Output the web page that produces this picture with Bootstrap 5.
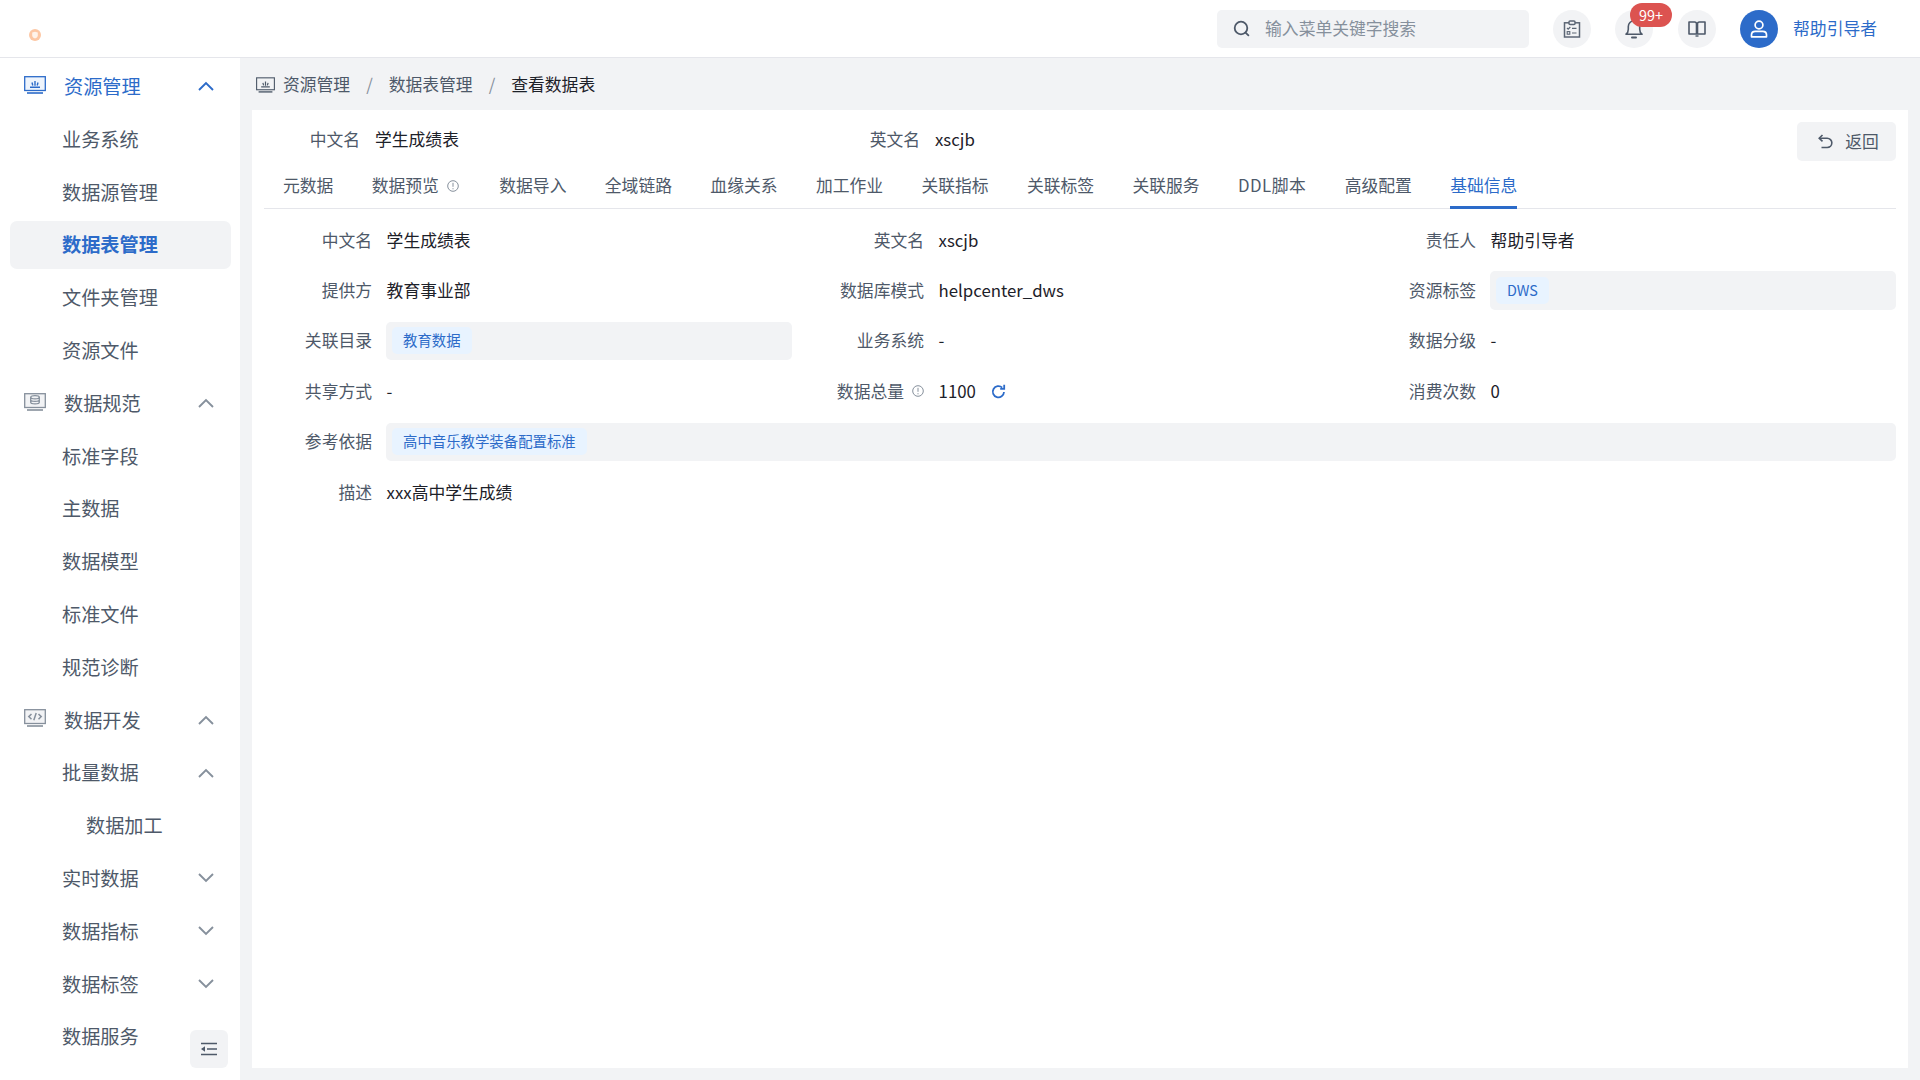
<!DOCTYPE html>
<html lang="zh-CN">
<head>
<meta charset="utf-8">
<title>查看数据表</title>
<link href="https://cdn.jsdelivr.net/npm/bootstrap@5.3.0/dist/css/bootstrap.min.css" rel="stylesheet">
<style>
:root{--brand:#2c6bc9;--page:#f2f3f5;--muted:#4e5969;--ink:#1d2129;--hair:#e5e6eb;--faint:#86909c}
html,body{height:100%}
body{font-family:"Noto Sans CJK SC","Liberation Sans",sans-serif;font-size:16.8px;color:var(--ink);background:var(--page);overflow:hidden}
svg{display:block;flex:none}
.app-shell{height:1080px}
.top-bar{height:58px;background:#fff;border-bottom:1.2px solid var(--hair);padding-right:43px}
.logo-slot{padding:28px 0 0 28px}
.search-box{width:312px;height:38px;background:var(--page);border-radius:5px;padding-left:16px;gap:15px;margin-right:24px}
.search-box .form-control{border:0;background:transparent;box-shadow:none;padding:0;font-size:16.8px;color:var(--ink);border-radius:0}
.search-box .form-control::placeholder{color:var(--faint);opacity:1}
.round-btn{width:38px;height:38px;border-radius:50%;background:var(--page);margin-right:24px}
.round-btn.bell-btn{margin-right:25px}
.count-pill{top:-7px;left:15px;width:42px;height:24px;border-radius:12px;background:#dc5350;color:#fff;font-size:14.4px;line-height:24px;text-align:center}
.avatar-btn{background:var(--brand);margin-right:15px}
.user-name{color:var(--brand)}
.side-nav{width:240px;background:#fff;padding:4.400px 9px 0 10px}
.side-item{height:48px;margin-bottom:4.8px;border-radius:7px;color:var(--muted);font-size:19.2px;padding:0 17px 0 52px}
.side-item.top-level{padding-left:14px;gap:18px}
.side-item.top-level>svg:first-child{margin-bottom:3px}
.side-item.deep{padding-left:76px}
.side-item.here{background:var(--page);color:var(--brand);font-weight:700}
.side-item.open-parent{color:var(--brand)}
.chev{margin-left:auto;color:var(--faint)}
.open-parent .chev{color:var(--brand)}
.fold-btn{right:12px;bottom:12px;width:38px;height:38px;border-radius:6px;background:var(--page)}
.work-area{background:var(--page);min-width:0}
.crumb-bar{height:52px;padding:2px 0 0 16px;gap:8px}
.crumb-bar .breadcrumb{--bs-breadcrumb-margin-bottom:0;--bs-breadcrumb-item-padding-x:16px;--bs-breadcrumb-divider-color:var(--faint)}
.crumb-bar .breadcrumb-item{color:var(--muted)}
.crumb-bar .breadcrumb-item.active{color:var(--ink)}
.detail-panel{margin:0 12px 12px 12px;height:958px;background:#fff;padding:12px 12px 0 12px}
.sum-row{height:39px}
.sum-cell{width:560px;margin-bottom:4px}
.sum-label{width:96px;text-align:right;color:var(--muted);margin-right:15px}
.back-btn{--bs-btn-padding-x:0;--bs-btn-padding-y:0;--bs-btn-bg:var(--page);--bs-btn-border-width:0;--bs-btn-color:var(--muted);--bs-btn-font-size:16.8px;--bs-btn-border-radius:5px;--bs-btn-hover-bg:#e5e6eb;--bs-btn-hover-color:var(--muted);width:99px;height:39px;margin-left:auto;padding-left:4px;gap:12px}
.tab-strip{height:48px;border-bottom:1.2px solid var(--hair);padding-left:19px;gap:38.400px;flex-wrap:nowrap}
.tab-strip .nav-link{padding:5px 0 0;height:48px;margin-bottom:-1.2px;color:var(--muted);font-size:16.8px;gap:8px;border-bottom:3px solid transparent}
.tab-strip .nav-link svg{margin-right:2px}
.tab-strip .nav-link.active{color:var(--brand);border-bottom-color:var(--brand)}
.tab-strip .nav-link.latin-tab{letter-spacing:.5px}
.info-grid{display:grid;grid-template-columns:repeat(3,1fr);column-gap:24px;row-gap:12px;padding-top:12px}
.info-cell{height:38.4px;min-width:0}
.span-all{grid-column:1/-1}
.info-label{width:108px;flex:none;text-align:right;color:var(--muted);gap:8px;justify-content:flex-end}
.info-value{margin-left:14.6px;gap:15px}
.tag-well{flex:1;height:38.4px;background:var(--page);border-radius:5px;padding-left:6px;margin-left:14px}
.soft-tag{height:27px;line-height:25px;padding:0 11px;background:#e8f3ff;color:var(--brand);font-size:14.4px;border-radius:5px}
</style>
</head>
<body>
<div class="app-shell d-flex flex-column">
  <header class="top-bar d-flex align-items-center flex-none">
    <div class="logo-slot align-self-start">
      <svg width="14" height="14" viewBox="0 0 14 14"><circle cx="7" cy="7" r="6" fill="#fdc7a4"/><path d="M4.2 4.6 7 3.8l2.8.8v2.6C9.8 9 8.4 10 7 10.4 5.6 10 4.2 9 4.2 7.2z" fill="#fff3ea"/></svg>
    </div>
    <div class="ms-auto search-box d-flex align-items-center">
      <svg width="17" height="17" viewBox="0 0 17 17" fill="none" stroke="#4e5969" stroke-width="1.8" stroke-linecap="round"><circle cx="8" cy="8" r="6.3"/><path d="m12.8 12.8 2.6 2.6"/></svg>
      <input class="form-control" type="text" placeholder="输入菜单关键字搜索" aria-label="搜索">
    </div>
    <div class="round-btn d-flex align-items-center justify-content-center">
      <svg width="18" height="18" viewBox="0 0 18 18" fill="none" stroke="#5c6675" stroke-width="1.5"><rect x="1.5" y="2.8" width="15" height="14.2"/><rect x="6" y="1" width="6" height="3.4" rx="1" fill="#f2f3f5"/><path d="m4 8 1.2 1.2L7.3 7M9 8.4h4.5M9 13h4.5" stroke-width="1.2"/><rect x="4.2" y="11.6" width="2.6" height="2.6" stroke-width="1.1"/></svg>
    </div>
    <div class="round-btn bell-btn position-relative d-flex align-items-center justify-content-center">
      <svg width="18" height="20" viewBox="0 0 18 20" fill="none" stroke="#4e5969" stroke-width="1.6" stroke-linejoin="round"><path d="M1 15.2c1.5-1 2.3-2.3 2.3-5V7.5a5.7 5.7 0 0 1 11.4 0v2.7c0 2.7.8 4 2.3 5z"/><path d="M7 18.6h4" stroke-width="2" stroke-linecap="round"/></svg>
      <span class="count-pill position-absolute">99+</span>
    </div>
    <div class="round-btn d-flex align-items-center justify-content-center">
      <svg width="18" height="16" viewBox="0 0 18 16" fill="none" stroke="#4e5969" stroke-width="1.6" stroke-linejoin="round"><path d="M1 1h5.600c1.200 0 1.900.6 1.900 1.800v10.200H1zM17 1h-5.600c-1.200 0-1.900.6-1.900 1.800v10.200H17z"/><path d="M7.500 15h3" stroke-width="1.400"/></svg>
    </div>
    <div class="round-btn avatar-btn d-flex align-items-center justify-content-center">
      <svg width="18" height="18" viewBox="0 0 18 18" fill="none" stroke="#fff" stroke-width="1.7" stroke-linejoin="round"><circle cx="9" cy="5" r="3.900"/><path d="M1.500 16.800v-2c0-2.200 1.800-3.400 3.800-3.400h7.400c2 0 3.800 1.200 3.800 3.400v2z"/></svg>
    </div>
    <span class="user-name">帮助引导者</span>
  </header>

  <div class="d-flex flex-grow-1 position-relative overflow-hidden">
    <nav class="side-nav flex-none position-relative">
      <div class="side-item top-level open-parent d-flex align-items-center">
        <svg width="22" height="18" viewBox="0 0 22 18" fill="none" stroke="#2c6bc9" stroke-width="1.300"><rect x=".7" y=".7" width="20.600" height="13.800" fill="#eef4fc"/><path d="M3 17h16" stroke-width="1.600"/><path d="M6 11.200h10M11 5v4.800M8 6.500l.8 3M14 6.500l-.8 3" stroke-width="1.400"/></svg>
        <span>资源管理</span>
        <svg class="chev" width="16" height="10" viewBox="0 0 16 10" fill="none" stroke="currentColor" stroke-width="1.900"><path d="m1 9 7-7 7 7"/></svg>
      </div>
      <div class="side-item d-flex align-items-center">业务系统</div>
      <div class="side-item d-flex align-items-center">数据源管理</div>
      <div class="side-item here d-flex align-items-center">数据表管理</div>
      <div class="side-item d-flex align-items-center">文件夹管理</div>
      <div class="side-item d-flex align-items-center">资源文件</div>
      <div class="side-item top-level d-flex align-items-center">
        <svg width="22" height="18" viewBox="0 0 22 18" fill="none" stroke="#86909c" stroke-width="1.300"><rect x=".7" y=".7" width="20.600" height="13.800" fill="#f2f3f5"/><path d="M3 17h16" stroke-width="1.600"/><ellipse cx="11" cy="4.300" rx="4.300" ry="1.600"/><path d="M6.700 4.300v5c0 .9 1.900 1.600 4.300 1.600s4.300-.7 4.300-1.600v-5M6.700 6.800c0 .9 1.900 1.600 4.300 1.600s4.300-.7 4.300-1.600"/></svg>
        <span>数据规范</span>
        <svg class="chev" width="16" height="10" viewBox="0 0 16 10" fill="none" stroke="currentColor" stroke-width="1.900"><path d="m1 9 7-7 7 7"/></svg>
      </div>
      <div class="side-item d-flex align-items-center">标准字段</div>
      <div class="side-item d-flex align-items-center">主数据</div>
      <div class="side-item d-flex align-items-center">数据模型</div>
      <div class="side-item d-flex align-items-center">标准文件</div>
      <div class="side-item d-flex align-items-center">规范诊断</div>
      <div class="side-item top-level d-flex align-items-center">
        <svg width="22" height="18" viewBox="0 0 22 18" fill="none" stroke="#86909c" stroke-width="1.300"><rect x=".7" y=".7" width="20.600" height="13.800" fill="#f2f3f5"/><path d="M3 17h16" stroke-width="1.600"/><path d="M7.500 5 4.800 7.600l2.700 2.600M14.500 5l2.700 2.600-2.700 2.600M12.200 4l-2.400 7.200" stroke-width="1.500"/></svg>
        <span>数据开发</span>
        <svg class="chev" width="16" height="10" viewBox="0 0 16 10" fill="none" stroke="currentColor" stroke-width="1.900"><path d="m1 9 7-7 7 7"/></svg>
      </div>
      <div class="side-item d-flex align-items-center">批量数据
        <svg class="chev" width="16" height="10" viewBox="0 0 16 10" fill="none" stroke="currentColor" stroke-width="1.900"><path d="m1 9 7-7 7 7"/></svg>
      </div>
      <div class="side-item deep d-flex align-items-center">数据加工</div>
      <div class="side-item d-flex align-items-center">实时数据
        <svg class="chev" width="16" height="10" viewBox="0 0 16 10" fill="none" stroke="currentColor" stroke-width="1.900"><path d="m1 1 7 7 7-7"/></svg>
      </div>
      <div class="side-item d-flex align-items-center">数据指标
        <svg class="chev" width="16" height="10" viewBox="0 0 16 10" fill="none" stroke="currentColor" stroke-width="1.900"><path d="m1 1 7 7 7-7"/></svg>
      </div>
      <div class="side-item d-flex align-items-center">数据标签
        <svg class="chev" width="16" height="10" viewBox="0 0 16 10" fill="none" stroke="currentColor" stroke-width="1.900"><path d="m1 1 7 7 7-7"/></svg>
      </div>
      <div class="side-item d-flex align-items-center">数据服务</div>
      <div class="fold-btn position-absolute d-flex align-items-center justify-content-center">
        <svg width="18" height="14" viewBox="0 0 18 14" fill="none" stroke="#4e5969" stroke-width="1.700"><path d="M1 1.500h16M7 7h10M1 12.500h16"/><path d="M5 4.300v5.400L1 7z" fill="#4e5969" stroke="none"/></svg>
      </div>
    </nav>

    <main class="work-area flex-grow-1 d-flex flex-column">
      <div class="crumb-bar d-flex align-items-center">
        <svg width="19" height="16" viewBox="0 0 22 18" fill="none" stroke="#4e5969" stroke-width="1.300"><rect x=".7" y=".7" width="20.600" height="13.800"/><path d="M3 17h16" stroke-width="1.600"/><path d="M6 11.200h10M11 5v4.800M8 6.500l.8 3M14 6.500l-.8 3" stroke-width="1.400"/></svg>
        <ol class="breadcrumb">
          <li class="breadcrumb-item">资源管理</li>
          <li class="breadcrumb-item">数据表管理</li>
          <li class="breadcrumb-item active" aria-current="page">查看数据表</li>
        </ol>
      </div>
      <section class="detail-panel">
        <div class="sum-row d-flex align-items-center">
          <div class="sum-cell d-flex"><span class="sum-label">中文名</span><span>学生成绩表</span></div>
          <div class="sum-cell d-flex"><span class="sum-label">英文名</span><span>xscjb</span></div>
          <button class="btn back-btn d-flex align-items-center justify-content-center" type="button">
            <svg width="15" height="15" viewBox="0 0 15 15" fill="none" stroke="#4e5969" stroke-width="1.600"><path d="M4.500 1 1.200 4.200l3.300 3.200"/><path d="M1.500 4.200h7.700a4.600 4.600 0 0 1 0 9.300H3.500"/></svg>
            <span>返回</span>
          </button>
        </div>
        <ul class="nav tab-strip">
          <li class="nav-item"><a class="nav-link d-flex align-items-center" href="#">元数据</a></li>
          <li class="nav-item"><a class="nav-link d-flex align-items-center" href="#">数据预览
            <svg width="12" height="12" viewBox="0 0 12 12" fill="none" stroke="#86909c" stroke-width="1"><circle cx="6" cy="6" r="5.300"/><path d="M6 2.800v4M6 8.200v1.100"/></svg></a></li>
          <li class="nav-item"><a class="nav-link d-flex align-items-center" href="#">数据导入</a></li>
          <li class="nav-item"><a class="nav-link d-flex align-items-center" href="#">全域链路</a></li>
          <li class="nav-item"><a class="nav-link d-flex align-items-center" href="#">血缘关系</a></li>
          <li class="nav-item"><a class="nav-link d-flex align-items-center" href="#">加工作业</a></li>
          <li class="nav-item"><a class="nav-link d-flex align-items-center" href="#">关联指标</a></li>
          <li class="nav-item"><a class="nav-link d-flex align-items-center" href="#">关联标签</a></li>
          <li class="nav-item"><a class="nav-link d-flex align-items-center" href="#">关联服务</a></li>
          <li class="nav-item"><a class="nav-link latin-tab d-flex align-items-center" href="#">DDL脚本</a></li>
          <li class="nav-item"><a class="nav-link d-flex align-items-center" href="#">高级配置</a></li>
          <li class="nav-item"><a class="nav-link active d-flex align-items-center" href="#">基础信息</a></li>
        </ul>
        <div class="info-grid">
          <div class="info-cell d-flex align-items-center"><span class="info-label d-flex">中文名</span><span class="info-value d-flex">学生成绩表</span></div>
          <div class="info-cell d-flex align-items-center"><span class="info-label d-flex">英文名</span><span class="info-value d-flex">xscjb</span></div>
          <div class="info-cell d-flex align-items-center"><span class="info-label d-flex">责任人</span><span class="info-value d-flex">帮助引导者</span></div>

          <div class="info-cell d-flex align-items-center"><span class="info-label d-flex">提供方</span><span class="info-value d-flex">教育事业部</span></div>
          <div class="info-cell d-flex align-items-center"><span class="info-label d-flex">数据库模式</span><span class="info-value d-flex">helpcenter_dws</span></div>
          <div class="info-cell d-flex align-items-center"><span class="info-label d-flex">资源标签</span><div class="tag-well d-flex align-items-center"><span class="soft-tag">DWS</span></div></div>

          <div class="info-cell d-flex align-items-center"><span class="info-label d-flex">关联目录</span><div class="tag-well d-flex align-items-center"><span class="soft-tag">教育数据</span></div></div>
          <div class="info-cell d-flex align-items-center"><span class="info-label d-flex">业务系统</span><span class="info-value d-flex">-</span></div>
          <div class="info-cell d-flex align-items-center"><span class="info-label d-flex">数据分级</span><span class="info-value d-flex">-</span></div>

          <div class="info-cell d-flex align-items-center"><span class="info-label d-flex">共享方式</span><span class="info-value d-flex">-</span></div>
          <div class="info-cell d-flex align-items-center"><span class="info-label d-flex align-items-center">数据总量
            <svg width="12" height="12" viewBox="0 0 12 12" fill="none" stroke="#86909c" stroke-width="1"><circle cx="6" cy="6" r="5.300"/><path d="M6 2.800v4M6 8.200v1.100"/></svg></span>
            <span class="info-value d-flex align-items-center">1100
            <svg width="15" height="15" viewBox="0 0 15 15" fill="none" stroke="#2c6bc9" stroke-width="1.800"><path d="M13 8a5.600 5.600 0 1 1-1.800-4.400"/><path d="M13.200 .8v4h-4" /></svg></span></div>
          <div class="info-cell d-flex align-items-center"><span class="info-label d-flex">消费次数</span><span class="info-value d-flex">0</span></div>

          <div class="info-cell span-all d-flex align-items-center"><span class="info-label d-flex">参考依据</span><div class="tag-well d-flex align-items-center"><span class="soft-tag">高中音乐教学装备配置标准</span></div></div>

          <div class="info-cell d-flex align-items-center"><span class="info-label d-flex">描述</span><span class="info-value d-flex">xxx高中学生成绩</span></div>
        </div>
      </section>
    </main>
  </div>
</div>
</body>
</html>
